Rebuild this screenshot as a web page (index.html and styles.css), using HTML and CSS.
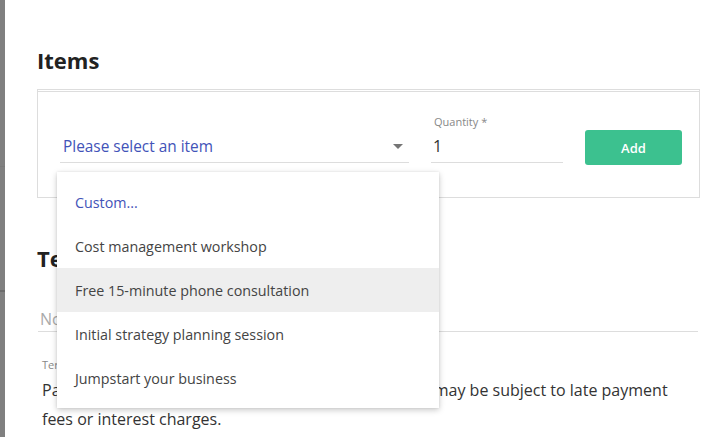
FILE: index.html
```html
<!DOCTYPE html>
<html lang="en">
<head>
    <meta charset="UTF-8">
    <title>Invoice items</title>
    <link rel="stylesheet" href="styles.css">
</head>
<body>
    <div class="backdrop"></div>
    <div class="panel">
        <h2 class="section-title">Items</h2>

        <!-- item picker -->
        <div class="item-box">
            <div class="item-row">
                <div class="field field-select">
                    <div class="select-input">
                        <span class="select-value">Please select an item</span>
                        <span class="caret"></span>
                    </div>

                    <!-- open dropdown -->
                    <ul class="menu">
                        <li class="menu-item custom">Custom...</li>
                        <li class="menu-item">Cost management workshop</li>
                        <li class="menu-item hover">Free 15-minute phone consultation</li>
                        <li class="menu-item">Initial strategy planning session</li>
                        <li class="menu-item">Jumpstart your business</li>
                    </ul>
                </div>
                <div class="field field-qty">
                    <label class="field-label">Quantity *</label>
                    <div class="text-input">1</div>
                </div>
                <button class="add-btn">Add</button>
            </div>
        </div>

        <h2 class="section-title terms-title">Terms &amp; notes</h2>
        <div class="notes-input">Notes</div>

        <div class="terms">
            <div class="terms-label">Terms</div>
            <p class="terms-text">Payment is due within 30 days. All overdue balances may be subject to late payment fees or interest charges.</p>
        </div>
    </div>
</body>
</html>
```

FILE: styles.css
```css
* {
    margin: 0;
    padding: 0;
    box-sizing: border-box;
}

body {
    display: flex;
    height: 100vh;
    overflow: hidden;
    font-family: "Open Sans", "Noto Sans", sans-serif;
    color: #333;
    background: #fff;
}

/* dimmed page behind the drawer */
.backdrop {
    width: 5px;
    flex-shrink: 0;
    background:
        linear-gradient(#7a7a7a, #7a7a7a) 0 166px / 100% 1px no-repeat,
        linear-gradient(#6c6c6c, #6c6c6c) 0 290px / 100% 2px no-repeat,
        #808080;
}

.panel {
    flex: 1;
    padding: 44px 25px 0 32px;
}

.section-title {
    font-size: 22px;
    font-weight: 700;
    line-height: 32px;
    color: #222;
}

/* items box */
.item-box {
    margin-top: 13px;
    border: 1px solid #ddd;
    border-top: 3px double #ddd;
    padding: 22px 17px 34px 22px;
}

.item-row {
    display: flex;
    align-items: flex-end;
    gap: 22px;
}

.field {
    position: relative;
}

.field-select {
    width: 349px;
}

.field-qty {
    width: 132px;
}

.field-label {
    display: block;
    font-size: 11px;
    line-height: 16px;
    color: #888;
    padding-left: 3px;
}

.select-input,
.text-input {
    display: flex;
    align-items: center;
    height: 33px;
    padding: 0 6px 0 3px;
    border-bottom: 1px solid #ddd;
    font-size: 16px;
}

.select-value {
    flex: 1;
    font-size: 15.4px;
    color: #4253b8;
}

.caret {
    width: 0;
    height: 0;
    border-left: 5px solid transparent;
    border-right: 5px solid transparent;
    border-top: 5px solid #757575;
}

.text-input {
    color: #333;
    padding-left: 2px;
}

.add-btn {
    width: 97px;
    height: 35px;
    margin-bottom: -2px;
    border: none;
    border-radius: 3px;
    background: #3cc18f;
    color: #fff;
    font-family: inherit;
    font-size: 13px;
    font-weight: 600;
}

/* dropdown menu */
.menu {
    position: absolute;
    top: calc(100% + 9px);
    left: -3px;
    width: 382px;
    padding: 8px 0;
    list-style: none;
    background: #fff;
    box-shadow: 0 2px 6px rgba(0, 0, 0, 0.22), 0 0 2px rgba(0, 0, 0, 0.08);
    z-index: 10;
}

.menu-item {
    height: 44px;
    line-height: 45px;
    padding-left: 18px;
    font-size: 14.3px;
    color: #444;
}

.menu-item.custom {
    color: #4253b8;
}

.menu-item.hover {
    background: #eee;
}

/* terms section */
.terms-title {
    margin-top: 44px;
}

.notes-input {
    margin: 18px 2px 0 1px;
    padding: 15px 2px 0;
    height: 40px;
    line-height: 24px;
    border-bottom: 1px solid #ddd;
    font-size: 16px;
    color: #aaa;
}

.terms {
    padding: 26px 28px 0 5px;
}

.terms-label {
    font-size: 11px;
    line-height: 14px;
    color: #888;
}

.terms-text {
    margin-top: 4px;
    font-size: 16px;
    line-height: 29px;
    color: #333;
}
```
